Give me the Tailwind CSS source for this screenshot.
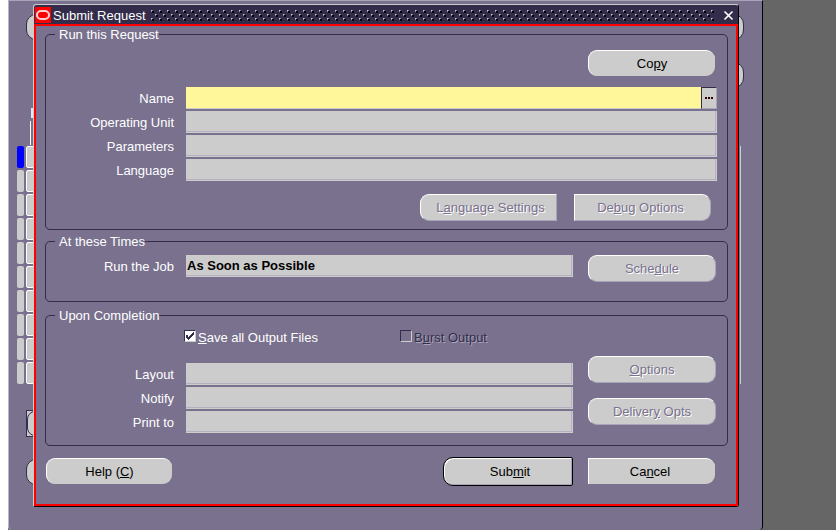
<!DOCTYPE html>
<html lang="en">
<head>
<meta charset="utf-8">
<title>Submit Request</title>
<script src="https://cdn.jsdelivr.net/npm/@tailwindcss/browser@4"></script>
</head>
<body class="flex min-h-screen overflow-hidden bg-[#666666] font-['Liberation_Sans',Arial,sans-serif] text-[13px] leading-[15px] text-white">
<div class="w-2 bg-white"></div>
<main class="relative mr-[73px] flex-1 rounded-b border-t border-r border-l border-t-[#a9a5b9] border-r-black border-l-[#b9b6c6] bg-[#79718e]">

  <!-- Parent form, mostly covered by the dialog -->
  <div class="flex justify-between pr-[18px] pl-[17px] pt-[13px]" aria-hidden="true">
    <div class="h-[26px] w-32 rounded-[10px] border border-[#332c4a] bg-[#cccccc]"></div>
    <div class="flex flex-col gap-[22px]">
      <div class="h-[26px] w-32 rounded-[10px] border border-[#332c4a] bg-[#cccccc]"></div>
      <div class="h-[26px] w-32 rounded-[10px] border border-[#332c4a] bg-[#cccccc]"></div>
    </div>
  </div>
  <div class="mt-5 ml-[22px] h-[10px] w-4 border-l-2 border-[#dfe8f5]" aria-hidden="true"></div>
  <div class="mt-[3px] ml-[21px] h-6 w-4 border-l border-white" aria-hidden="true"></div>
  <div class="mt-px mr-[21px] ml-2 flex flex-col gap-[2px] border-r border-[#cccccc]" aria-hidden="true">
    <div class="flex gap-[2px]"><div class="h-[22px] w-[7px] rounded-[2px] bg-[#0000ff]"></div><div class="h-[22px] w-20 rounded-[2px] border border-white bg-[#cccccc]"></div></div>
    <div class="flex gap-[2px]"><div class="h-[22px] w-[7px] rounded-[2px] bg-[#cccccc]"></div><div class="h-[22px] w-20 rounded-[2px] border border-white bg-[#cccccc]"></div></div>
    <div class="flex gap-[2px]"><div class="h-[22px] w-[7px] rounded-[2px] bg-[#cccccc]"></div><div class="h-[22px] w-20 rounded-[2px] border border-white bg-[#cccccc]"></div></div>
    <div class="flex gap-[2px]"><div class="h-[22px] w-[7px] rounded-[2px] bg-[#cccccc]"></div><div class="h-[22px] w-20 rounded-[2px] border border-white bg-[#cccccc]"></div></div>
    <div class="flex gap-[2px]"><div class="h-[22px] w-[7px] rounded-[2px] bg-[#cccccc]"></div><div class="h-[22px] w-20 rounded-[2px] border border-white bg-[#cccccc]"></div></div>
    <div class="flex gap-[2px]"><div class="h-[22px] w-[7px] rounded-[2px] bg-[#cccccc]"></div><div class="h-[22px] w-20 rounded-[2px] border border-white bg-[#cccccc]"></div></div>
    <div class="flex gap-[2px]"><div class="h-[22px] w-[7px] rounded-[2px] bg-[#cccccc]"></div><div class="h-[22px] w-20 rounded-[2px] border border-white bg-[#cccccc]"></div></div>
    <div class="flex gap-[2px]"><div class="h-[22px] w-[7px] rounded-[2px] bg-[#cccccc]"></div><div class="h-[22px] w-20 rounded-[2px] border border-white bg-[#cccccc]"></div></div>
    <div class="flex gap-[2px]"><div class="h-[22px] w-[7px] rounded-[2px] bg-[#cccccc]"></div><div class="h-[22px] w-20 rounded-[2px] border border-white bg-[#cccccc]"></div></div>
    <div class="flex gap-[2px]"><div class="h-[22px] w-[7px] rounded-[2px] bg-[#cccccc]"></div><div class="h-[22px] w-20 rounded-[2px] border border-white bg-[#cccccc]"></div></div>
  </div>
  <div class="mt-[26px] ml-[17px] h-[27px] w-32 border border-[#332c4a] bg-[#cccccc]" aria-hidden="true"><div class="h-full rounded-[8px] border border-[#332c4a] bg-[#cccccc]"></div></div>
  <div class="mt-[22px] ml-[17px] h-[26px] w-32 rounded-[10px] border border-[#332c4a] bg-[#cccccc]" aria-hidden="true"></div>

  <!-- Dialog window -->
  <section class="absolute top-[3px] right-[23px] left-6 rounded-t-[3px] rounded-br-[3px] border border-t-[#cccccc] border-r-black border-b-black border-l-[#cccccc] bg-[#79718e]" role="dialog" aria-labelledby="dialog-title">
    <header class="flex h-[19px] items-center rounded-t-[3px] bg-[#332c4a] pl-px">
      <svg class="mt-px size-4 shrink-0" viewBox="0 0 16 16" aria-hidden="true"><rect width="16" height="16" fill="#ff0000"/><rect x="2" y="4" width="12" height="8" rx="4" fill="none" stroke="#ffd0d0" stroke-width="2"/></svg>
      <h1 id="dialog-title" class="ml-[2px] mt-[2px] shrink-0 font-normal">Submit Request</h1>
      <svg class="ml-[5px] mt-[2px] h-[11px] min-w-0 flex-1" aria-hidden="true">
        <defs>
          <pattern id="grip" width="8" height="8" patternUnits="userSpaceOnUse">
            <path d="M1 1h2v2h-2z" fill="#000"/><path d="M0 0h2v1h-1v1h-1z" fill="#8e89a2"/><path d="M0 0h1v1h-1z" fill="#c4c0d2"/>
            <path d="M5 5h2v2h-2z" fill="#000"/><path d="M4 4h2v1h-1v1h-1z" fill="#8e89a2"/><path d="M4 4h1v1h-1z" fill="#c4c0d2"/>
          </pattern>
        </defs>
        <rect width="100%" height="11" fill="url(#grip)"/>
      </svg>
      <button type="button" aria-label="Close" class="mt-[2px] mr-[4px] ml-2 shrink-0"><svg class="size-[11px]" viewBox="0 0 11 11"><path d="M1.500 1.500L9.500 9.500M9.500 1.500L1.500 9.500" stroke="#fff" stroke-width="1.700"/></svg></button>
    </header>

    <form class="border-2 border-[#ff0000] pt-px pr-2 pb-[18px] pl-[9px]">
      <fieldset class="h-[203px] rounded-[5px] border border-[#332c4a] pr-[10px]">
        <legend class="ml-[9px] h-[15px] pt-px pl-1 leading-[14px]">Run this Request</legend>
        <div class="flex justify-end pt-2 pr-[2px]">
          <button type="button" class="h-[26px] w-[127px] rounded-[9px] border-t border-l border-white bg-[#cccccc] text-black">Co<u>p</u>y</button>
        </div>
        <div class="mt-[11px] flex flex-col gap-[2px]">
          <div class="flex items-center">
            <label for="name" class="mr-3 w-32 text-right">Name</label>
            <input id="name" type="text" class="h-[22px] min-w-0 flex-1 border-b border-[#cccccc] bg-[#fff799] px-px font-bold text-black outline-none">
            <button type="button" aria-label="List of values" class="flex h-[22px] w-4 items-center justify-center border border-t-[#332c4a] border-r-[#a9a5b9] border-b-[#a9a5b9] border-l-[#332c4a] bg-[#cccccc]"><svg class="h-[2px] w-2" viewBox="0 0 8 2"><path d="M0 0h2v2h-2zM3 0h2v2h-2zM6 0h2v2h-2z" fill="#330000"/></svg></button>
          </div>
          <div class="flex items-center">
            <label for="unit" class="mr-3 w-32 text-right">Operating Unit</label>
            <input id="unit" type="text" class="h-[22px] min-w-0 flex-1 border-r border-b border-[#cccccc] bg-[#cccccc] px-px font-bold text-black shadow-[inset_-1px_-1px_#b4b0c2] outline-none">
          </div>
          <div class="flex items-center">
            <label for="params" class="mr-3 w-32 text-right">Parameters</label>
            <input id="params" type="text" class="h-[22px] min-w-0 flex-1 border-r border-b border-[#cccccc] bg-[#cccccc] px-px font-bold text-black shadow-[inset_-1px_-1px_#b4b0c2] outline-none">
          </div>
          <div class="flex items-center">
            <label for="lang" class="mr-3 w-32 text-right">Language</label>
            <input id="lang" type="text" class="h-[22px] min-w-0 flex-1 border-r border-b border-[#cccccc] bg-[#cccccc] px-px font-bold text-black shadow-[inset_-1px_-1px_#b4b0c2] outline-none">
          </div>
        </div>
        <div class="mt-[13px] flex justify-end gap-[17px] pr-[6px]">
          <button type="button" disabled class="h-[27px] w-[137px] rounded-l-[9px] border border-t-white border-r-[#a9a5b9] border-b-[#a9a5b9] border-l-white bg-[#cccccc] pl-1 text-[#79718e] [text-shadow:1px_1px_#fff]">L<u>a</u>nguage Settings</button>
          <button type="button" disabled class="h-[27px] w-[137px] rounded-r-[9px] border border-t-white border-r-[#a9a5b9] border-b-[#a9a5b9] border-l-white bg-[#cccccc] pr-1 text-[#79718e] [text-shadow:1px_1px_#fff]">De<u>b</u>ug Options</button>
        </div>
      </fieldset>

      <fieldset class="mt-1 h-[68px] rounded-[5px] border border-[#332c4a] pr-[11px]">
        <legend class="ml-[9px] h-[15px] pt-px pl-1 leading-[14px]">At these Times</legend>
        <div class="flex items-start pt-[6px]">
          <label for="run" class="mt-1 mr-3 w-32 text-right">Run the Job</label>
          <input id="run" type="text" value="As Soon as Possible" readonly class="mr-[15px] h-[22px] min-w-0 flex-1 border-r border-b border-[#cccccc] bg-[#cccccc] px-px font-bold text-black shadow-[inset_-1px_-1px_#b4b0c2] outline-none">
          <button type="button" disabled class="h-[27px] w-32 rounded-[9px] border border-t-white border-r-[#a9a5b9] border-b-[#a9a5b9] border-l-white bg-[#cccccc] text-[#79718e] [text-shadow:1px_1px_#fff]">Sche<u>d</u>ule</button>
        </div>
      </fieldset>

      <fieldset class="mt-[6px] h-[138px] rounded-[5px] border border-[#332c4a] pr-[11px]">
        <legend class="ml-[9px] h-[15px] pt-px pl-1 leading-[14px]">Upon Completion</legend>
        <div class="grid grid-cols-[216px_1fr] pt-[7px] pl-[138px]">
          <div class="flex gap-[2px]">
            <span class="grid size-3">
              <input id="save" type="checkbox" checked class="peer col-start-1 row-start-1 size-3 appearance-none border border-t-[#332c4a] border-r-[#cccccc] border-b-[#cccccc] border-l-[#332c4a] bg-white">
              <svg class="pointer-events-none invisible col-start-1 row-start-1 size-3 peer-checked:visible" viewBox="0 0 12 12" aria-hidden="true"><path d="M2 5h2v2h1v-1h1v-1h1v-1h1v-1h1v-1h1v3h-1v1h-1v1h-1v1h-1v1h-1v1h-1v-1h-1v-1h-1z" fill="#332c4a"/></svg>
            </span>
            <label for="save"><u>S</u>ave all Output Files</label>
          </div>
          <div class="flex gap-[2px]">
            <input id="burst" type="checkbox" disabled class="size-3 appearance-none border border-t-[#332c4a] border-r-[#cccccc] border-b-[#cccccc] border-l-[#332c4a]">
            <label for="burst" class="text-[#332c4a] [text-shadow:1px_1px_#a9a5b9]">B<u>u</u>rst Output</label>
          </div>
        </div>
        <div class="mt-[11px] flex">
          <div class="mt-[7px] mr-[15px] flex min-w-0 flex-1 flex-col gap-[2px]">
            <div class="flex items-center">
              <label for="layout" class="mr-3 w-32 text-right">Layout</label>
              <input id="layout" type="text" class="h-[22px] min-w-0 flex-1 border-r border-b border-[#cccccc] bg-[#cccccc] px-px font-bold text-black shadow-[inset_-1px_-1px_#b4b0c2] outline-none">
            </div>
            <div class="flex items-center">
              <label for="notify" class="mr-3 w-32 text-right">Notify</label>
              <input id="notify" type="text" class="h-[22px] min-w-0 flex-1 border-r border-b border-[#cccccc] bg-[#cccccc] px-px font-bold text-black shadow-[inset_-1px_-1px_#b4b0c2] outline-none">
            </div>
            <div class="flex items-center">
              <label for="print" class="mr-3 w-32 text-right">Print to</label>
              <input id="print" type="text" class="h-[22px] min-w-0 flex-1 border-r border-b border-[#cccccc] bg-[#cccccc] px-px font-bold text-black shadow-[inset_-1px_-1px_#b4b0c2] outline-none">
            </div>
          </div>
          <div class="flex w-32 flex-col gap-[15px]">
            <button type="button" disabled class="h-[27px] rounded-[9px] border border-t-white border-r-[#a9a5b9] border-b-[#a9a5b9] border-l-white bg-[#cccccc] text-[#79718e] [text-shadow:1px_1px_#fff]"><u>O</u>ptions</button>
            <button type="button" disabled class="h-[27px] rounded-[9px] border border-t-white border-r-[#a9a5b9] border-b-[#a9a5b9] border-l-white bg-[#cccccc] text-[#79718e] [text-shadow:1px_1px_#fff]">Deliver<u>y</u> Opts</button>
          </div>
        </div>
      </fieldset>

      <div class="mt-[11px] flex items-start pr-[13px] pl-px">
        <button type="button" class="mt-px mr-auto h-[26px] w-[126px] rounded-[9px] border-t border-l border-white bg-[#cccccc] text-black">Help (<u>C</u>)</button>
        <button type="submit" class="mr-[15px] h-[29px] w-[130px] rounded-l-[10px] rounded-r-[2px] border border-black bg-[#cccccc] pl-1 text-black shadow-[inset_1px_1px_#fff,inset_-1px_-1px_#a9a5b9]">Sub<u>m</u>it</button>
        <button type="button" class="mt-px h-[26px] w-[127px] rounded-r-[9px] border-t border-l border-white bg-[#cccccc] pr-1 text-black">Ca<u>n</u>cel</button>
      </div>
    </form>
  </section>
</main>
</body>
</html>
